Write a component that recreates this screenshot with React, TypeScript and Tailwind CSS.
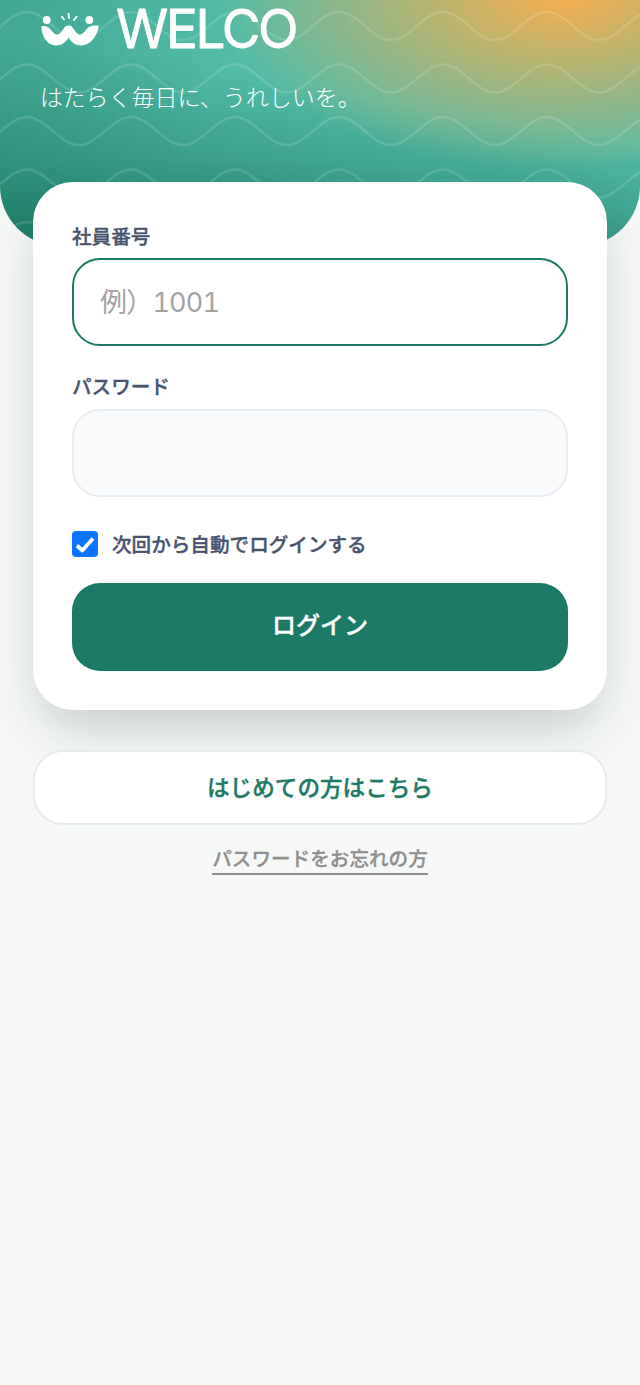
const jp = "font-['Noto_Sans_CJK_JP','Noto_Sans',sans-serif]";
const labelText = "text-[19.6px] leading-[28px] font-medium text-[#47546e] [-webkit-text-stroke:0.35px_#47546e]";

function Logo() {
  return (
    <svg width="300" height="56" viewBox="40 0 300 56" fill="none" className="block">
      <circle cx="46.7" cy="20" r="3.9" fill="#fff" />
      <circle cx="89.3" cy="20" r="3.9" fill="#fff" />
      <path d="M62 16.7 L64 19.5 M68.6 13.8 L69 18 M76.7 16.7 L74 20" stroke="#fff" strokeWidth="1.9" strokeLinecap="round" />
      <path
        d="M41.3 26.5 C45 25.2 49 27 51.5 30.5 C53.5 33.3 56 35.3 58.5 34.2 C61 33 63 29.5 64.8 27 C66.3 25 70.7 25 72.2 27 C74 29.5 76 33 78.5 34.2 C81 35.3 83.5 33.3 85.5 30.5 C88 27 92 25 98.7 25.8 C98 34 91.5 45.5 81 45.5 C75.5 45.5 71 42 68.6 37.5 C66 42 61.5 45.5 56 45.5 C46.5 45.5 41.5 35 41.3 26.5 Z"
        fill="#fff"
      />
      <text
        x="116"
        y="47.5"
        fill="#fff"
        stroke="#fff"
        strokeWidth="0.8"
        strokeLinejoin="round"
        fontFamily="Inter, sans-serif"
        fontSize="53"
        letterSpacing="-2.3"
      >
        WELCO
      </text>
    </svg>
  );
}

function Waves() {
  return (
    <svg className="absolute inset-0 h-full w-full" aria-hidden="true">
      <defs>
        <pattern id="waves" width="104" height="52.5" patternUnits="userSpaceOnUse">
          <path
            d="M-25 40 C-6 40 8 12 27 12 C46 12 60 40 79 40 C98 40 112 12 131 12"
            fill="none"
            stroke="#fff"
            strokeOpacity="0.14"
            strokeWidth="2.2"
          />
        </pattern>
      </defs>
      <rect width="100%" height="100%" fill="url(#waves)" />
    </svg>
  );
}

export default function App() {
  return (
    <div className={`min-h-[1385px] bg-[#f6f8f6] ${jp}`}>
      <header className="relative h-[246px] overflow-hidden rounded-b-[60px] bg-[radial-gradient(circle_240px_at_0px_0px,rgba(28,122,102,0.3)_0%,rgba(28,122,102,0)_100%),radial-gradient(ellipse_350px_175px_at_565px_-5px,rgba(248,176,79,1)_0%,rgba(248,176,79,0)_100%),linear-gradient(10deg,#1c7a66_0%,#52bba8_60%,#52bba8_100%)]">
        <Waves />
        <div className="relative px-10">
          <Logo />
          <p className="mt-[22px] text-[23px] leading-[36px] font-light text-white">はたらく毎日に、うれしいを。</p>
        </div>
      </header>

      <main className="relative -mt-[64px] px-[33px]">
        <form className="rounded-[40px] bg-white px-[39px] pt-10 pb-[39px] shadow-[0_24px_56px_-10px_rgba(20,50,45,0.24)]">
          <label className={`block ${labelText}`}>社員番号</label>
          <input
            placeholder="例）1001"
            className="mt-[8px] block h-[88px] w-full rounded-[28px] border-2 border-[#1c7a66] bg-white px-[26px] font-['Inter','Noto_Sans_CJK_JP',sans-serif] text-[27px] tracking-[-0.8px] tabular-nums outline-none placeholder:text-[#a3a3a3]"
          />
          <label className={`mt-[26px] block ${labelText}`}>パスワード</label>
          <input
            type="password"
            className="mt-[9px] block h-[88px] w-full rounded-[28px] border-2 border-[#e8edf2] bg-[#f8fafc] px-[26px] text-[27px] outline-none"
          />
          <div className="mt-[33px] flex items-center gap-[14px]">
            <span className="flex h-[26px] w-[26px] items-center justify-center rounded-[4px] bg-[#0a75ff]">
              <svg width="26" height="26" viewBox="0 0 26 26" fill="none">
                <path d="M5 14.5 L10.3 19.5 L21 7.5" stroke="#fff" strokeWidth="3.8" strokeLinejoin="round" />
              </svg>
            </span>
            <span className={labelText}>次回から自動でログインする</span>
          </div>
          <button
            type="button"
            className="mt-[25px] flex h-[88px] w-full items-center justify-center rounded-[28px] bg-[#1c7a66] pb-[6px] text-[24px] font-medium text-white [-webkit-text-stroke:0.35px_#fff]"
          >
            ログイン
          </button>
        </form>

        <button
          type="button"
          className="mt-10 flex h-[75px] w-full items-center justify-center rounded-[30px] border-2 border-[#e6ebee] bg-white pb-[2px] text-[22.6px] font-medium text-[#1c7a66] [-webkit-text-stroke:0.35px_#1c7a66]"
        >
          はじめての方はこちら
        </button>
        <div className="mt-[19px] flex justify-center">
          <a className="border-b-2 border-[#8f8f8f] pb-[2px] text-[19.6px] leading-[27px] font-medium text-[#8f8f8f] [-webkit-text-stroke:0.3px_#8f8f8f]">
            パスワードをお忘れの方
          </a>
        </div>
      </main>
    </div>
  );
}
